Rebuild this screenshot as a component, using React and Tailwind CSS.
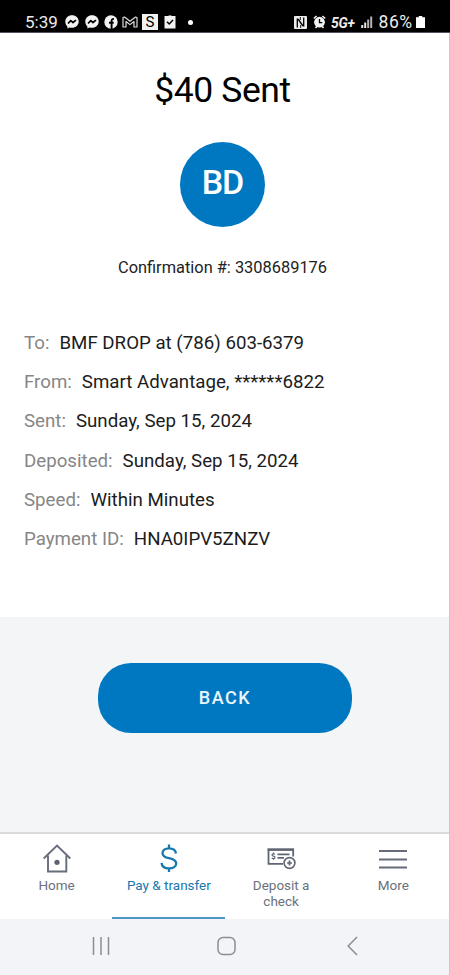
import React from "react";

const details = [
  { label: "To:", value: "BMF DROP at (786) 603-6379" },
  { label: "From:", value: "Smart Advantage, ******6822" },
  { label: "Sent:", value: "Sunday, Sep 15, 2024" },
  { label: "Deposited:", value: "Sunday, Sep 15, 2024" },
  { label: "Speed:", value: "Within Minutes" },
  { label: "Payment ID:", value: "HNA0IPV5ZNZV" },
];

const MessengerIcon = () => (
  <svg width="14" height="14" viewBox="0 0 14 14">
    <path
      d="M7 .3C3.200.3.300 3 .3 6.700c0 1.900.8 3.500 2.100 4.700v2.100l2-1.100c.8.200 1.700.4 2.600.4 3.800 0 6.700-2.700 6.700-6.300S10.800.3 7 .3z"
      fill="#f2f2f2"
    />
    <path
      d="M3 8.500 5.800 5.700 8 7.500 11 5.200"
      fill="none"
      stroke="#000"
      strokeWidth="1.700"
      strokeLinejoin="round"
    />
  </svg>
);

const FacebookIcon = () => (
  <svg width="14" height="14" viewBox="0 0 14 14">
    <circle cx="7" cy="7" r="6.700" fill="#f2f2f2" />
    <path
      d="M7.600 14V6c0-1.500.7-2.200 2.400-2.100M5 7.800h4.700"
      fill="none"
      stroke="#000"
      strokeWidth="1.900"
    />
  </svg>
);

const GmailIcon = () => (
  <svg width="16" height="12" viewBox="0 0 16 12">
    <path
      d="M1 11V1.500L2.500 1 8 5.300 13.500 1l1.500.5V11h-3V5.500L8 8.600 4 5.500V11z"
      fill="none"
      stroke="#dcdcdc"
      strokeWidth="1.200"
      strokeLinejoin="round"
    />
  </svg>
);

const TaskIcon = () => (
  <svg width="12" height="14" viewBox="0 0 12 14">
    <path d="M.5 1h3.300L6 .2 8.200 1h3.300v12.600H.5z" fill="#f2f2f2" />
    <path d="m3 6.800 2.200 2.200L9 5" fill="none" stroke="#000" strokeWidth="1.500" />
  </svg>
);

const NfcIcon = () => (
  <svg width="13" height="13" viewBox="0 0 13 13">
    <rect width="13" height="13" rx="1" fill="#ececec" />
    <path
      d="M3.300 11.500V2.500M9.700 1.500v9M4 3l5 7"
      fill="none"
      stroke="#000"
      strokeWidth="1.300"
    />
    <path d="M6.300 1v3M6.700 9v3" stroke="#000" strokeWidth=".9" />
  </svg>
);

const AlarmIcon = () => (
  <svg width="13" height="14" viewBox="0 0 13 14">
    <path
      d="M.8 3.500 3.600 1M12.200 3.500 9.400 1M2.500 13l1.600-2M10.500 13l-1.600-2"
      stroke="#f2f2f2"
      strokeWidth="1.600"
    />
    <circle cx="6.500" cy="7.200" r="5.400" fill="#f2f2f2" />
    <path d="M6.500 4v3.600h2.800" fill="none" stroke="#000" strokeWidth="1.300" />
  </svg>
);

const SignalIcon = () => (
  <svg width="12" height="12" viewBox="0 0 12 12">
    <path d="M1.200 12V9M4.200 12V6.500" stroke="#e5e5e5" strokeWidth="2" />
    <path d="M7.200 12V3.500M10.200 12V.5" stroke="#b4b4b4" strokeWidth="2" />
  </svg>
);

const BatteryIcon = () => (
  <svg width="9" height="12" viewBox="0 0 9 12">
    <path d="M2.700 0h3.600v1.300H9V12H0V1.300h2.700z" fill="#fff" />
  </svg>
);

const StatusBar = () => (
  <header className="flex h-[33px] items-end justify-between border-b border-[#55505f] bg-black pr-[25px] pb-[1px] pl-[25px] text-[#ececec]">
    <div className="flex h-[18px] items-center">
      <span className="w-[40px] text-[17px] leading-[18px]">5:39</span>
      <div className="flex items-center gap-[5.5px]">
        <MessengerIcon />
        <MessengerIcon />
        <FacebookIcon />
      </div>
      <div className="ml-[4px] flex items-center gap-[4px]">
        <GmailIcon />
        <span className="flex h-4 w-4 items-center justify-center bg-[#f2f2f2] text-[15px] leading-4 text-black">
          S
        </span>
      </div>
      <div className="ml-[6px] flex items-center gap-[11.5px]">
        <TaskIcon />
        <span className="h-[5px] w-[5px] rounded-full bg-white" />
      </div>
    </div>
    <div className="flex h-[18px] items-center">
      <NfcIcon />
      <span className="ml-[6px]">
        <AlarmIcon />
      </span>
      <span className="ml-[5px] w-[30px] pt-[3px] text-[14px] leading-[15px] font-bold tracking-[-0.3px] italic">
        5G+
      </span>
      <SignalIcon />
      <span className="ml-[5.5px] w-[37.5px] text-[17.5px] leading-[18px] tracking-[0.6px]">86%</span>
      <BatteryIcon />
    </div>
  </header>
);

const HomeIcon = () => (
  <svg width="28" height="30" viewBox="0 0 28 30" fill="none" stroke="#686d7b" strokeWidth="1.900">
    <path d="M.7 14.500 14 1.500l13.300 13M5 11.500V27.500h18.300V11.500" />
    <circle cx="14" cy="18.300" r="2.600" fill="#5d6270" stroke="none" />
  </svg>
);

const DollarIcon = () => (
  <svg width="18" height="30" viewBox="0 0 18 30" fill="none" stroke="#1878ae" strokeWidth="2.300">
    <path d="M9 .5v4M9 24v4M16 9.500C15.600 6.200 13 4.300 9 4.300c-4 0-6.500 2-6.500 4.900 0 3.300 2.800 4.200 6.500 5 4 .9 7.200 2 7.200 5.300 0 3-3 4.900-7.200 4.900-4.400 0-7.200-2-7.400-5.500" />
  </svg>
);

const DepositIcon = () => (
  <svg width="29" height="22" viewBox="0 0 29 22" fill="none" stroke="#5f6573" strokeWidth="1.800">
    <path d="M16 15.800H1.500V1.500h24.700v7" />
    <path d="M.6 1.700h26.400" strokeWidth="2.200" />
    <path d="M10.500 6.400h12M10.500 9.900h6.500" />
    <path d="M8 6.300C7.500 5.700 5 5.400 5 6.900c0 1.600 3 .8 3 2.500 0 1.500-2.500 1.400-3.200.6M6.500 4.500v1M6.500 10.500v1.300" strokeWidth="1.200" />
    <circle cx="22.500" cy="15" r="5.400" fill="#fff" strokeWidth="1.600" />
    <path d="M22.500 12.600v4.800M20.100 15h4.800" strokeWidth="1.700" />
  </svg>
);

const MoreIcon = () => (
  <svg width="28" height="20" viewBox="0 0 28 20" stroke="#666b79" strokeWidth="2">
    <path d="M0 2h28M0 10.500h28M0 18.500h28" />
  </svg>
);

const tabs = [
  { label: "Home", icon: <HomeIcon /> },
  { label: "Pay & transfer", icon: <DollarIcon />, active: true },
  { label: "Deposit a check", icon: <DepositIcon /> },
  { label: "More", icon: <MoreIcon /> },
];

const TabBar = () => (
  <nav className="grid h-[87px] grid-cols-4 border-t-2 border-[#d9dbdc] bg-white">
    {tabs.map((tab) => (
      <button
        key={tab.label}
        className={`flex flex-col items-center border-b-2 pt-[10px] pl-px text-[13.5px] leading-4 ${
          tab.active ? "border-[#4c97c3] text-[#1878ae]" : "border-transparent text-[#6c717d]"
        }`}
      >
        <span className="flex h-[30px] items-center">{tab.icon}</span>
        <span className="mt-[3px] w-[88px]">{tab.label}</span>
      </button>
    ))}
  </nav>
);

const SystemNav = () => (
  <footer className="flex flex-1 items-center justify-between bg-[#f3f4f7] pr-[91px] pb-[2px] pl-[92px]">
    <svg width="18" height="18" viewBox="0 0 18 18" stroke="#8b8d92" strokeWidth="1.500">
      <path d="M1.500 0v18M9 0v18M16.500 0v18" />
    </svg>
    <svg className="mr-[4px]" width="20" height="20" viewBox="0 0 20 20" fill="none" stroke="#8b8d92" strokeWidth="1.500">
      <rect x="1" y="1.500" width="17" height="17" rx="5" />
    </svg>
    <svg width="11" height="20" viewBox="0 0 11 20" fill="none" stroke="#8b8d92" strokeWidth="1.500">
      <path d="M10 1 1.200 10 10 19" />
    </svg>
  </footer>
);

const App = () => {
  return (
    <div className="flex h-[975px] w-[450px] flex-col bg-white font-[Roboto,sans-serif]">
      <StatusBar />
      <div className="flex flex-1 flex-col border-r border-[#c9c9cb]">
        <main className="flex h-[584px] flex-col">
          <h1 className="mt-[36px] pr-[4px] text-center text-[35.5px] leading-[42px] tracking-[-0.4px] text-black">
            $40 Sent
          </h1>
          <div className="mt-[31px] ml-[180px] flex h-[85px] w-[85px] items-center justify-center rounded-full bg-[#0078c1] pb-[5px] text-[34px] font-medium tracking-[-1px] text-white">
            BD
          </div>
          <p className="mt-[31px] pr-[4px] text-center text-[16.4px] leading-[20px] text-[#222]">
            Confirmation #: 3308689176
          </p>
          <div className="mt-[45.5px] ml-[24px] text-[18.7px]">
            {details.map((item) => (
              <p key={item.label} className="flex h-[39.2px] items-center gap-[10px]">
                <span className="text-[#868686]">{item.label}</span>
                <span className="text-[#1c1c1c]">{item.value}</span>
              </p>
            ))}
          </div>
        </main>
        <section className="h-[215px] bg-[#f3f5f7] pt-[46px] pl-[98px]">
          <button className="h-[70px] w-[254px] rounded-[33px] bg-[#0078c1] pb-[1px] text-[18px] font-medium tracking-[1.500px] text-[#eaf6fc]">
            BACK
          </button>
        </section>
        <TabBar />
        <SystemNav />
      </div>
    </div>
  );
};

export default App;
